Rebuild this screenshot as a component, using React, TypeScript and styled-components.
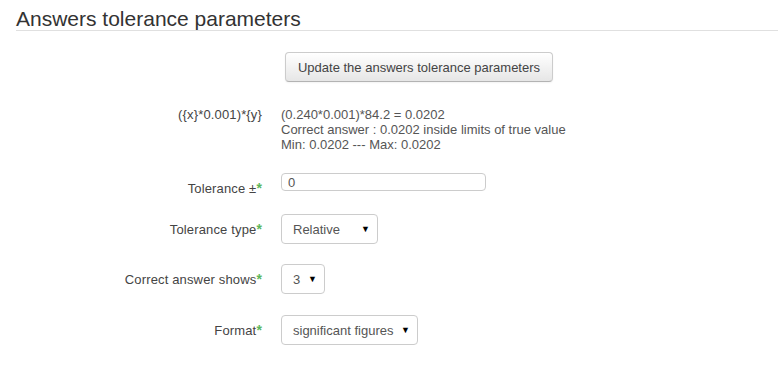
import styled, { createGlobalStyle } from "styled-components";

const GlobalStyle = createGlobalStyle`
  body {
    margin: 0;
    background: #fff;
    font-family: "Liberation Sans", Arial, sans-serif;
    color: #333;
  }
`;

const Page = styled.div`
  padding: 7px 0 0 16px;
`;

const Heading = styled.h3`
  margin: 0;
  font-size: 21px;
  font-weight: normal;
  line-height: 23px;
  color: #333;
  border-bottom: 1px solid #e0e0e0;
`;

const ButtonRow = styled.div`
  display: flex;
  justify-content: center;
  padding: 21px 0 0 44px;
`;

const Button = styled.button`
  font-family: "Liberation Sans", Arial, sans-serif;
  font-size: 13px;
  color: #444;
  height: 30px;
  padding: 0 12px;
  border: 1px solid #ccc;
  border-bottom-color: #b3b3b3;
  border-radius: 4px;
  background: linear-gradient(#fff, #e6e6e6);
  box-shadow: 0 1px 2px rgba(0, 0, 0, 0.05);
`;

const Form = styled.div`
  display: flex;
  flex-direction: column;
  padding-top: 25px;
`;

const Row = styled.div<{ $top?: boolean; $gap: number }>`
  display: flex;
  align-items: ${(p) => (p.$top ? "flex-start" : "center")};
  margin-bottom: ${(p) => p.$gap}px;
`;

const Label = styled.div<{ $pad?: number }>`
  width: 246px;
  flex-shrink: 0;
  padding: ${(p) => p.$pad ?? 0}px 19px 0 0;
  text-align: right;
  font-size: 13px;
  line-height: 15px;
  letter-spacing: 0.15px;
  color: #444;
`;

const Star = styled.span`
  color: #5cb85c;
  font-weight: bold;
  font-size: 14px;
`;

const Info = styled.div`
  font-size: 13px;
  line-height: 15px;
  color: #555;
`;

const Input = styled.input`
  width: 191px;
  height: 16px;
  padding: 0 6px;
  border: 1px solid #ccc;
  border-radius: 4px;
  font-family: "Liberation Sans", Arial, sans-serif;
  font-size: 13px;
  color: #555;
  outline: none;
`;

const Select = styled.div<{ $w: number }>`
  width: ${(p) => p.$w}px;
  height: 30px;
  box-sizing: border-box;
  display: flex;
  align-items: center;
  justify-content: space-between;
  padding: 0 7px 0 11px;
  border: 1px solid #ccc;
  border-radius: 4px;
  font-size: 13px;
  color: #555;
  background: #fff;
`;

const Arrow = styled.span`
  font-size: 9px;
  color: #000;
`;

export default function App() {
  return (
    <>
      <GlobalStyle />
      <Page>
        <Heading>Answers tolerance parameters</Heading>
        <ButtonRow>
          <Button>Update the answers tolerance parameters</Button>
        </ButtonRow>
        <Form>
          <Row $top $gap={21}>
            <Label>({"{x}"}*0.001)*{"{y}"}</Label>
            <Info>
              (0.240*0.001)*84.2 = 0.0202
              <br />
              Correct answer : 0.0202 inside limits of true value
              <br />
              Min: 0.0202 --- Max: 0.0202
            </Info>
          </Row>
          <Row $top $gap={18}>
            <Label $pad={8}>
              Tolerance ±<Star>*</Star>
            </Label>
            <Input defaultValue="0" />
          </Row>
          <Row $gap={20}>
            <Label>
              Tolerance type<Star>*</Star>
            </Label>
            <Select $w={97}>
              Relative <Arrow>▼</Arrow>
            </Select>
          </Row>
          <Row $gap={21}>
            <Label>
              Correct answer shows<Star>*</Star>
            </Label>
            <Select $w={44}>
              3 <Arrow>▼</Arrow>
            </Select>
          </Row>
          <Row $gap={21}>
            <Label>
              Format<Star>*</Star>
            </Label>
            <Select $w={137}>
              significant figures <Arrow>▼</Arrow>
            </Select>
          </Row>
        </Form>
      </Page>
    </>
  );
}
